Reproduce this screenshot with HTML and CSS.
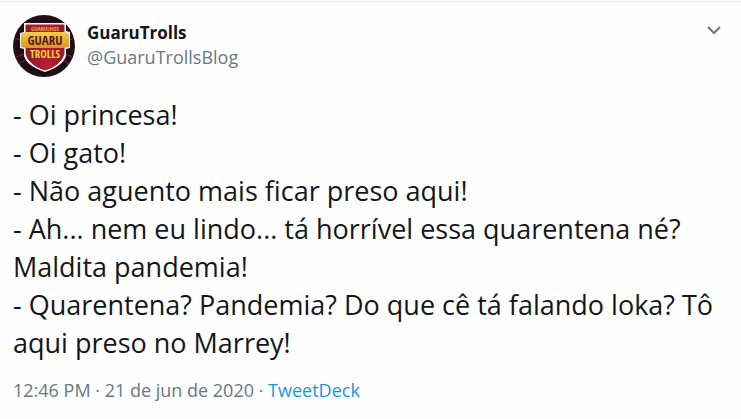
FILE: index.html
```html
<!DOCTYPE html>
<html lang="pt-BR">
<head>
<meta charset="utf-8">
<title>GuaruTrolls</title>
<meta name="viewport" content="width=device-width, initial-scale=1">
<link rel="stylesheet" href="styles.css">
</head>
<body>
<article class="tweet">
  <header class="tweet-header">
    <svg class="avatar" viewBox="0 0 62 62" role="img" aria-label="Guarulhos Guaru Trolls">
      <defs>
        <clipPath id="round"><circle cx="31" cy="31" r="31"/></clipPath>
        <linearGradient id="gold" x1="0" y1="0" x2="0" y2="1">
          <stop offset="0" stop-color="#f4cf4c"/><stop offset="1" stop-color="#dd9425"/>
        </linearGradient>
        <linearGradient id="shield" x1="0" y1="0" x2="1" y2="0">
          <stop offset="0" stop-color="#851b2b"/><stop offset=".6" stop-color="#b91d32"/><stop offset="1" stop-color="#8c1a2b"/>
        </linearGradient>
      </defs>
      <g clip-path="url(#round)">
        <rect width="62" height="62" fill="#210e14"/>
        <path d="M0 23l11 3M0 43l14-5M3 50l15-8M62 23l-11 4M62 43l-13-5M58 50l-12-7" stroke="#62313c" stroke-width="1"/>
        <path d="M11 8H53V16L57 17V33L53 34V41Q50 51 32 57Q14 51 11 41V34L7 33V18L11 17Z" fill="#fff3ed"/>
        <path d="M13 10H51V39Q48 50 32 55Q16 50 13 39Z" fill="url(#shield)" stroke="#9c2438" stroke-width="1"/>
        <path d="M8 19L13 17H51L56 19V32L50 33H14L8 32Z" fill="url(#gold)"/>
        <text class="logo-top" x="32" y="16" text-anchor="middle">GUARULHOS</text>
        <text class="logo-name" x="32" y="30" text-anchor="middle">GUARU</text>
        <text class="logo-bottom" x="32" y="43" text-anchor="middle">TROLLS</text>
      </g>
    </svg>
    <div class="author">
      <strong class="name">GuaruTrolls</strong>
      <span class="handle">@GuaruTrollsBlog</span>
    </div>
    <button class="menu" type="button" aria-label="Mais opções">
      <svg viewBox="0 0 16 16" aria-hidden="true"><path d="M2 4L8 10L14 4"/></svg>
    </button>
  </header>
  <p class="message">- Oi princesa!<br>- Oi gato!<br>- Não aguento mais ficar preso aqui!<br>- Ah... nem eu lindo... tá horrível essa quarentena né? Maldita pandemia!<br>- Quarentena? Pandemia? Do que cê tá falando loka? Tô aqui preso no Marrey!</p>
  <footer class="meta"><time datetime="2020-06-21T12:46">12:46 PM · 21 de jun de 2020</time> · <a href="#">TweetDeck</a></footer>
</article>
</body>
</html>
```
FILE: styles.css
```css
* {
  box-sizing: border-box;
}

body {
  margin: 0;
  background: #fefefe;
  color: #14171a;
  font-family: "Segoe UI", "Open Sans", "Noto Sans", sans-serif;
}

.tweet {
  margin-top: 1px;
  border-top: 1px solid #e6ecf0;
  padding: 13px;
}

.tweet-header {
  display: flex;
  align-items: flex-start;
  gap: 12px;
}

.avatar {
  flex: none;
  width: 62px;
  height: 62px;
}

.logo-top,
.logo-name,
.logo-bottom {
  font-family: "Liberation Sans Narrow", "Open Sans Condensed", "Liberation Sans", sans-serif;
  font-weight: bold;
}

.logo-top {
  font-size: 6px;
  fill: #e5aa3e;
}

.logo-name {
  font-size: 13px;
  fill: #5b1719;
}

.logo-bottom {
  font-size: 11px;
  fill: #f4cf42;
}

.author {
  flex: 1;
  display: flex;
  flex-direction: column;
  padding-top: 5px;
  font-size: 18px;
  line-height: 25px;
}

.name {
  font-size: 17px;
}

.handle,
.meta {
  color: #697882;
}

.menu {
  width: 16px;
  height: 16px;
  margin: 8px 6px 0 0;
  padding: 0;
  border: 0;
  background: none;
}

.menu svg {
  display: block;
  fill: none;
  stroke: #657786;
  stroke-width: 2;
}

.message {
  margin: 19px 0 16px;
  font-size: 27px;
  line-height: 38px;
}

.meta {
  font-size: 18px;
  line-height: 24px;
}

.meta a {
  color: #1b95e0;
  text-decoration: none;
}
```
